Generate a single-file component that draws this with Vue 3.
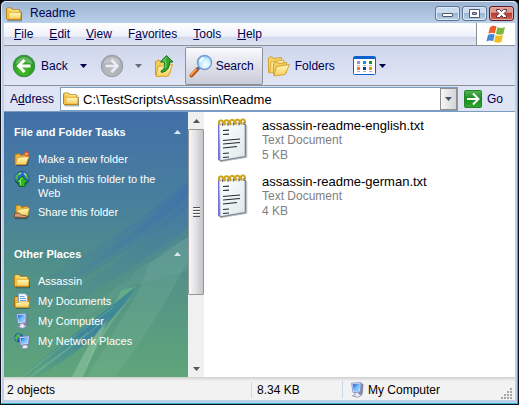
<script setup>
import { ref } from 'vue'

const menus = [
  { pre: '', key: 'F', post: 'ile' },
  { pre: '', key: 'E', post: 'dit' },
  { pre: '', key: 'V', post: 'iew' },
  { pre: 'F', key: 'a', post: 'vorites' },
  { pre: '', key: 'T', post: 'ools' },
  { pre: '', key: 'H', post: 'elp' },
]
const groups = [
  {
    title: 'File and Folder Tasks',
    items: [
      { icon: 'new-folder', label: 'Make a new folder' },
      { icon: 'publish', label: 'Publish this folder to the Web' },
      { icon: 'share', label: 'Share this folder' },
    ],
  },
  {
    title: 'Other Places',
    items: [
      { icon: 'folder', label: 'Assassin' },
      { icon: 'documents', label: 'My Documents' },
      { icon: 'computer', label: 'My Computer' },
      { icon: 'network', label: 'My Network Places' },
    ],
  },
]
const files = [
  { name: 'assassin-readme-english.txt', kind: 'Text Document', size: '5 KB' },
  { name: 'assassin-readme-german.txt', kind: 'Text Document', size: '4 KB' },
]
const address = ref('C:\\TestScripts\\Assassin\\Readme')
</script>

<template>
  <div class="window">
    <svg class="sprite" width="0" height="0" aria-hidden="true">
      <defs>
        <linearGradient id="g-folder" x1="0" y1="0" x2="0" y2="1">
          <stop offset="0" stop-color="#fff8bd" /><stop offset="1" stop-color="#f8cf5c" />
        </linearGradient>
        <linearGradient id="g-screen" x1="0" y1="0" x2="1" y2="1">
          <stop offset="0" stop-color="#1550c4" /><stop offset=".5" stop-color="#6fbaff" /><stop offset="1" stop-color="#a9dcff" />
        </linearGradient>
        <linearGradient id="g-go" x1="0" y1="0" x2="0" y2="1">
          <stop offset="0" stop-color="#56b356" /><stop offset=".5" stop-color="#178a1c" /><stop offset="1" stop-color="#34a82e" />
        </linearGradient>
        <radialGradient id="g-back" cx=".45" cy=".7" r=".8">
          <stop offset="0" stop-color="#4fc528" /><stop offset=".5" stop-color="#2da321" /><stop offset="1" stop-color="#2f8f3a" />
        </radialGradient>
        <radialGradient id="g-fwd" cx=".45" cy=".7" r=".8">
          <stop offset="0" stop-color="#bcbec4" /><stop offset="1" stop-color="#a2a4ac" />
        </radialGradient>
        <radialGradient id="g-lens" cx=".6" cy=".65" r=".7">
          <stop offset="0" stop-color="#ffffff" /><stop offset=".55" stop-color="#c0efff" /><stop offset="1" stop-color="#72bff0" />
        </radialGradient>
        <linearGradient id="g-page" x1="0" y1="0" x2="1" y2="1">
          <stop offset="0" stop-color="#ffffff" /><stop offset="1" stop-color="#dcebea" />
        </linearGradient>
      </defs>
      <symbol id="folder" viewBox="0 0 16 16">
        <path d="M1.500 14.800h14V6" fill="none" stroke="#2f3a3a" stroke-opacity=".55" />
        <path d="M.6 13V3.200Q.6 2 1.800 2h3.500l1.500 1.800h6Q14 3.800 14 5v1.500h1L14.500 13.500H1.200z" fill="#f7c94f" stroke="#b9790c" />
        <path d="M3 6.500h12L14.400 13H3z" fill="url(#g-folder)" stroke="#e0a526" stroke-width=".6" />
        <path d="M1.600 3h3.200l1.400 1.700H13" fill="none" stroke="#fff1a1" />
      </symbol>
      <symbol id="new-folder" viewBox="0 0 16 16">
        <path d="M2 14.600h11l2-6" fill="none" stroke="#2f3a3a" stroke-opacity=".6" />
        <path d="M1 13.500V3.400l4.200-.8 1.600 1.700 6-.9v8.300l-2 1.800z" fill="#eeb53c" stroke="#a96c0b" stroke-width=".8" />
        <path d="M3.600 6.600 15 5.300l-3 8.200H1.500z" fill="url(#g-folder)" stroke="#c98a1a" stroke-width=".6" />
        <path d="M12.500 0v6M9.500 3h6M10.400.9l4.200 4.200M14.600.9l-4.200 4.200" stroke="#f0502c" />
        <circle cx="12.500" cy="3" r="1.300" fill="#ffb04a" />
      </symbol>
      <symbol id="publish" viewBox="0 0 16 16">
        <circle cx="8" cy="7.500" r="7" fill="#2768c0" stroke="#123f7c" stroke-width=".7" />
        <path d="M1.500 5Q5 .6 7 1.400l-1 2.800-2 .6L3.200 9l-1.900-.8zM9 1.200l3.800 1.200 2 5.500-2.700-.5-1.400-3.800z" fill="#4fb84a" />
        <path d="M5 3.200 7.500 2M10 2l2 3" stroke="#d3eefa" stroke-width=".9" />
        <path d="M8 5 14 11.500h-3v4H5v-4H2z" fill="#2fb526" stroke="#0d6413" stroke-width=".9" />
        <path d="M8 6.700 5 10.300h1.500V14" fill="none" stroke="#98ed78" />
      </symbol>
      <symbol id="share" viewBox="0 0 16 16">
        <path d="M1 14.600h12l2-3" fill="none" stroke="#2f3a3a" stroke-opacity=".7" />
        <path d="M2 11V1.500h4.300l1.400 2L13.800 2v9z" fill="#f2bd42" stroke="#b0760f" stroke-width=".8" />
        <path d="M4 5.500 15.400 4l-2 8H2.800z" fill="url(#g-folder)" stroke="#cf9722" stroke-width=".6" />
        <path d="M.5 9.500 5 9l2.400 2 4.400.5 1.500 1.400-4.800.9L4 13 .5 13.400z" fill="#dba173" stroke="#6e3b20" stroke-width=".8" />
      </symbol>
      <symbol id="documents" viewBox="0 0 16 16">
        <path d="M1.500 15.300h14" stroke="#2f3a3a" stroke-opacity=".6" />
        <path d="M.6 14V4.500Q.6 3.500 2 3.500h12.500V14z" fill="#f2b83a" stroke="#a96c0b" />
        <path d="M4.400.6h6.700L13.600 3v8H4.400z" fill="#f4faff" stroke="#6494ca" stroke-width=".8" />
        <path d="M6 3.500h4.500M6 5.500h6M6 7.500h6" stroke="#63a5dd" />
        <path d="M1.500 9.500H5L6 8.800h9.300l-.6 5.400H1.500z" fill="url(#g-folder)" stroke="#d79d26" stroke-width=".7" />
      </symbol>
      <symbol id="computer" viewBox="0 0 16 16">
        <path d="m10.500 1 3.500 1.300-.8 9.200L10 14z" fill="#8a8cab" stroke="#5c6086" stroke-width=".6" />
        <path d="M2.600 1.200 12 .6l-.6 9.200-7.400.8z" fill="#d8e3fa" stroke="#6f83c0" stroke-width=".7" />
        <path d="m3.700 2.300 7.200-.5-.5 7-5.600.6z" fill="url(#g-screen)" />
        <path d="m5.800 10.800 3.800-.7.500 2 3 .8-4.600 2.500-5-1.600 2.500-1z" fill="#e8e9f2" stroke="#7c80a0" stroke-width=".7" />
      </symbol>
      <symbol id="network" viewBox="0 0 16 16">
        <circle cx="4.700" cy="4.800" r="4.500" fill="#1d57b4" />
        <path d="M.5 4.900 3.300.9l3 .2-.5 2.800-2.100 1L3 8.800z" fill="#4fb93f" />
        <path d="m13 11 1.800-7 .7.500-.6 6.600z" fill="#5c6086" />
        <path d="m5.200 3.700 10-.8-.6 8.300-8 1z" fill="#dce6fa" stroke="#6578b4" stroke-width=".7" />
        <path d="m6.300 4.900 7.800-.6-.5 6-6.100.7z" fill="url(#g-screen)" />
        <path d="m8.300 12.300 4.600-.5.500 1.700 1.800.7-4 1.500-5-.8 2.500-1z" fill="#eff0f6" stroke="#757a9c" stroke-width=".6" />
      </symbol>
      <symbol id="caret" viewBox="0 0 7 4"><path d="M0 0h7L3.500 4z" fill="currentColor" /></symbol>
      <symbol id="caret-up" viewBox="0 0 7 4"><path d="M0 4h7L3.500 0z" fill="currentColor" /></symbol>
    </svg>

    <header class="titlebar">
      <svg class="icon"><use href="#folder" /></svg>
      <h1>Readme</h1>
      <div class="controls">
        <button type="button" aria-label="Minimize">
          <svg width="13" height="11"><rect x="1.500" y="5.500" width="10" height="3" rx=".5" fill="#fff" stroke="#50586b" /></svg>
        </button>
        <button type="button" aria-label="Maximize">
          <svg width="13" height="11"><path d="M1.500 1.500h10v8h-10zM4.500 4.500v2h4v-2z" fill="#fff" fill-rule="evenodd" stroke="#50586b" /></svg>
        </button>
        <button type="button" class="close" aria-label="Close">
          <svg width="13" height="11"><path d="M1.500 1.500h3l2 2 2-2h3v1.500l-2.500 2.500 2.500 2.500v1.500h-3l-2-2-2 2h-3V8L4 5.500 1.500 3z" fill="#fff" stroke="#5f3440" /></svg>
        </button>
      </div>
    </header>

    <div class="menu-row">
      <nav class="menubar">
        <button v-for="m in menus" :key="m.key" type="button">{{ m.pre }}<u>{{ m.key }}</u>{{ m.post }}</button>
      </nav>
      <div class="brand">
        <svg width="22" height="20" viewBox="0 0 22 20">
          <path d="M5 3.300Q8.300.8 11.500 2.500L9.900 9.400Q6.700 8 3.300 9.800z" fill="#ed5c2b" />
          <path d="M12.500 3Q16 4.800 20 3l-1.700 7Q14.600 11.500 10.900 9.800z" fill="#7cb83b" />
          <path d="M3 10.900q3.300-1.800 6.700-.4l-1.600 6.700Q4.800 15.900 1.400 17.500z" fill="#4287d6" />
          <path d="M10.700 10.900q3.600 1.700 7.400.2l-1.700 6.900Q12.600 19.400 9 17.700z" fill="#f4bd20" />
        </svg>
      </div>
    </div>

    <div class="toolbar">
      <button type="button" class="tool back">
        <svg width="24" height="24" viewBox="0 0 24 24">
          <circle cx="12" cy="12" r="10.800" fill="url(#g-back)" stroke="#3c8c50" />
          <path d="M3.500 10Q5 3 12 3t8.500 7Q12 6.500 3.500 10z" fill="#fff" opacity=".28" />
          <path d="M12.500 6 6.500 12l6 6M7 12H18.500" fill="none" stroke="#fff" stroke-width="3" />
        </svg>
        <span>Back</span>
        <svg class="caret"><use href="#caret" /></svg>
      </button>
      <button type="button" class="tool forward" aria-label="Forward">
        <svg width="24" height="24" viewBox="0 0 24 24">
          <circle cx="12" cy="12" r="10.800" fill="url(#g-fwd)" stroke="#999ba4" />
          <path d="M3.500 10Q5 3 12 3t8.500 7Q12 6.500 3.500 10z" fill="#fff" opacity=".28" />
          <path d="M11.500 6 17.500 12l-6 6M17 12H5.500" fill="none" stroke="#eceef5" stroke-width="2.600" />
        </svg>
        <svg class="caret"><use href="#caret" /></svg>
      </button>
      <button type="button" class="tool up" aria-label="Up">
        <svg width="20" height="24" viewBox="0 0 20 24">
          <path d="M1.500 21V7.500L4.500 6l2.500 1.500 9-1.500v13l-3 3z" fill="#f5cb58" stroke="#cf9a2c" />
          <path d="m4 12.500 14.500-2-4 11.500L2 22.500z" fill="url(#g-folder)" stroke="#d7a233" />
          <path d="M7 17q4.500-1.500 3.500-9H6.500L12.500 1.500 19 8h-3.500q.5 9-8 10.500z" fill="#2fa62c" stroke="#16751d" />
          <path d="M12.500 3.300 9.500 6.900h2.200q.8 4-.8 7" fill="none" stroke="#93dc7b" />
        </svg>
      </button>
      <button type="button" class="tool search" aria-pressed="true">
        <svg width="24" height="24" viewBox="0 0 24 24">
          <path d="M2.500 21.500 8.500 15" stroke="#b5541c" stroke-width="4" stroke-linecap="round" />
          <path d="m2 20.800 5.500-6" stroke="#ff9a45" stroke-width="1.800" stroke-linecap="round" />
          <path d="m8 15.500 2-2" stroke="#536b91" stroke-width="3" />
          <circle cx="15.500" cy="8.500" r="7" fill="url(#g-lens)" stroke="#7d98d4" stroke-width="1.500" />
          <path d="M11 8q.5-3.500 4-4" fill="none" stroke="#fff" stroke-width="2" />
        </svg>
        <span>Search</span>
      </button>
      <button type="button" class="tool folders">
        <svg width="23" height="22" viewBox="0 0 23 22">
          <path d="M1.500 17.500V3L4 1.500l3 2L14.500 2.500v11z" fill="#f8d263" stroke="#d3a33a" />
          <path d="m4 7 13-2-3 11-11.500 2z" fill="url(#g-folder)" stroke="#dcac42" />
          <path d="M6.500 20V8.500L9.500 7l2.500 1.500 7.500-1v10z" fill="#f8d05a" stroke="#d0a03a" />
          <path d="m9.500 11.500 13-2-4.500 10-11 1.500z" fill="url(#g-folder)" stroke="#d5a238" />
        </svg>
        <span>Folders</span>
      </button>
      <button type="button" class="tool views" aria-label="Views">
        <svg width="23" height="19" viewBox="0 0 23 19">
          <rect x=".5" y=".5" width="22" height="18" rx="1" fill="#fff" stroke="#0b62cc" />
          <path d="M1 1h21v2H1z" fill="#0b62cc" />
          <path d="M4 5h3v3H4z" fill="#9a8fc8" /><path d="M10 5h3v3h-3z" fill="#1590ea" /><path d="M16 5h3v3h-3z" fill="#0b9c20" />
          <path d="M4 11h3v3H4z" fill="#ff6b45" /><path d="M10 11h3v3h-3z" fill="#0b3a9b" /><path d="M16 11h3v3h-3z" fill="#d2990d" />
          <path d="M4 9.500h3m3 0h3m3 0h3M4 15.500h3m3 0h3m3 0h3" stroke="#b4b4c0" />
        </svg>
        <svg class="caret"><use href="#caret" /></svg>
      </button>
    </div>

    <form class="addressbar" @submit.prevent>
      <label for="address">A<u>d</u>dress</label>
      <div class="field">
        <svg class="icon"><use href="#folder" /></svg>
        <input id="address" v-model="address" type="text" spellcheck="false" />
        <button type="button" class="drop" aria-label="Show addresses"><svg class="caret"><use href="#caret" /></svg></button>
      </div>
      <button type="submit" class="go">
        <svg width="18" height="18" viewBox="0 0 18 18">
          <rect x=".5" y=".5" width="17" height="17" rx="1" fill="url(#g-go)" stroke="#25832c" />
          <path d="M9 3.500 14.500 9 9 14.500M14 9H3" fill="none" stroke="#fff" stroke-width="2" />
        </svg>
        <span>Go</span>
      </button>
    </form>

    <main class="content">
      <aside class="sidebar">
        <svg class="aurora" viewBox="0 0 184 267" preserveAspectRatio="none" aria-hidden="true">
          <defs>
            <linearGradient id="g-beam" x1="1" y1="0" x2="0" y2="1">
              <stop offset="0" stop-color="#3f6fae" stop-opacity=".5" /><stop offset="1" stop-color="#3f7fa0" stop-opacity="0" />
            </linearGradient>
            <linearGradient id="g-streak" x1="1" y1="0" x2="0" y2="1">
              <stop offset="0" stop-color="#3f8a97" /><stop offset=".5" stop-color="#3a829c" stop-opacity=".85" /><stop offset="1" stop-color="#4d9a8c" stop-opacity=".1" />
            </linearGradient>
          </defs>
          <path d="M184 68Q130 120 0 190V216Q130 140 184 96z" fill="url(#g-beam)" />
          <path d="M184 74Q120 136 0 206V210Q130 136 184 84z" fill="url(#g-beam)" />
          <path d="M184 92Q120 150 20 212l-20 24Q130 160 184 116z" fill="url(#g-beam)" opacity=".7" />
          <path d="M184 126Q168 134 145 152 132 156 128 166L40 228Q90 205 128 175L184 160z" fill="#8fc5b0" opacity=".1" />
          <path d="M184 126 145 153l-12 30-50 84h28Q150 215 184 150z" fill="#9ad0b4" opacity=".14" />
          <path d="M117 180 133 175Q126 190 112 200L98 207Q112 192 117 180z" fill="#69b088" opacity=".8" />
          <path d="M133 175Q98 203 60 232 36 250 14 267H34Q78 240 98 218 122 194 133 175z" fill="url(#g-streak)" />
          <path d="M110 196Q70 226 18 267M100 210Q70 236 26 267M84 222Q62 240 32 262" fill="none" stroke="#9ccdb4" stroke-width=".8" opacity=".45" />
          <path d="M104 208Q84 232 68 267H79Q92 236 104 208z" fill="#a4d3ae" opacity=".4" />
          <path d="M130 184Q100 214 88 240L79 267Q98 220 130 184z" fill="#8ec8a2" opacity=".35" />
        </svg>
        <section v-for="g in groups" :key="g.title" class="group">
          <h2>
            <button type="button">
              <span>{{ g.title }}</span>
              <svg class="caret"><use href="#caret-up" /></svg>
            </button>
          </h2>
          <ul>
            <li v-for="i in g.items" :key="i.label">
              <a href="#">
                <svg class="icon"><use :href="'#' + i.icon" /></svg>
                <span>{{ i.label }}</span>
              </a>
            </li>
          </ul>
        </section>
      </aside>

      <div class="scrollbar">
        <button type="button" aria-label="Scroll up"><svg class="caret"><use href="#caret-up" /></svg></button>
        <div class="track"><div class="thumb"><i></i></div></div>
        <button type="button" aria-label="Scroll down"><svg class="caret"><use href="#caret" /></svg></button>
      </div>

      <ul class="files">
        <li v-for="f in files" :key="f.name">
          <svg width="32" height="46" viewBox="0 0 32 46">
            <path d="M4 44.500 30.500 40V8" fill="none" stroke="#8f939c" stroke-width="1.500" opacity=".6" />
            <path d="M2 6.500 4 5v39l-2-1z" fill="#7670d8" />
            <path d="m3.500 6.500 25-1V39L4.500 43.500z" fill="url(#g-page)" stroke="#c3c8d0" />
            <path d="M29.500 7v32.500L4 44" fill="none" stroke="#7e828c" />
            <path d="m7 13.500 6-.3M7 17.500l6-.3M7 23.500l17-1.500M7 27l17-1.500M7 31l14-1.500M7 36.500l6-.5M7 40.500l6-.5" stroke="#252a2d" stroke-width="1.200" />
            <path d="M4 8.500Q1.500 4 4.500 3.500T7.500 8M9.500 8.200Q7 3.700 10 3.200t3 4.500M15 7.900q-2.500-4.500.5-5t3 4.500M20.500 7.700q-2.500-4.500.5-5t3 4.500M26 7.500q-2.500-4.500.5-5t2.500 4" fill="none" stroke="#cda51c" stroke-width="2" />
            <path d="M6.500 6.500v2.500m5.500-2.700v2.500m5.500-2.800v2.500m5.500-2.700v2.500m5-2.700v2.500" stroke="#5f5378" stroke-width="1.200" />
          </svg>
          <div class="meta">
            <span class="name">{{ f.name }}</span>
            <span>{{ f.kind }}</span>
            <span>{{ f.size }}</span>
          </div>
        </li>
      </ul>
    </main>

    <footer class="status">
      <span class="count">2 objects</span>
      <span class="size">8.34 KB</span>
      <span class="place"><svg class="icon"><use href="#computer" /></svg>My Computer</span>
      <svg class="grip" width="12" height="12" viewBox="0 0 12 12">
        <path d="M9 0h2v2H9zM6 3h2v2H6zM9 3h2v2H9zM3 6h2v2H3zM6 6h2v2H6zM9 6h2v2H9zM0 9h2v2H0zM3 9h2v2H3zM6 9h2v2H6zM9 9h2v2H9z" fill="#a6a6a6" />
      </svg>
    </footer>
  </div>
</template>

<style>
body { margin: 0; background: #000; }
</style>

<style scoped>
* { box-sizing: border-box; }
.window {
  display: flex;
  flex-direction: column;
  min-height: 100vh;
  border: 1px solid #101018;
  border-radius: 6px 6px 0 0;
  background: #bcd0ea;
  box-shadow: inset -1px -1px #2fb4c8, inset 1px 0 #d8e8fa;
  padding: 0 3px 4px;
  font: 12px/15px "Liberation Sans", Arial, sans-serif;
  color: #000;
}
.sprite { position: absolute; }
button {
  margin: 0;
  padding: 0;
  border: 0;
  background: none;
  font: inherit;
  color: inherit;
}
h1, h2, ul { margin: 0; padding: 0; font: inherit; list-style: none; }
svg { flex: none; display: block; }
.icon { width: 16px; height: 16px; }
.caret { width: 7px; height: 4px; }

.titlebar {
  display: flex;
  align-items: center;
  gap: 8px;
  height: 22px;
  margin: 0 -2px;
  padding: 2px 3px 0 4px;
  border-top: 1px solid #e6f0fa;
  border-radius: 5px 5px 0 0;
  background: linear-gradient(#9cb4d2, #b9d0e9);
  color: #000050;
}
h1 { flex: 1; }
.controls { display: flex; gap: 2px; }
.controls button {
  display: grid;
  place-items: center;
  width: 25px;
  height: 15px;
  border: 1px solid #5e7492;
  border-radius: 3px;
  background: linear-gradient(#cbdcee 45%, #9db7d3 50%, #b8cfe6);
  box-shadow: inset 0 0 0 1px #dce9f6;
}
.controls .close {
  border-color: #5c1a24;
  background: linear-gradient(#dd9a90 40%, #b8382d 50%, #cf6a56);
  box-shadow: inset 0 0 0 1px #e7aaa0;
}

.menu-row { display: flex; height: 23px; border-bottom: 1px solid #8b8f96; color: #000050; }
.menubar {
  flex: 1;
  display: flex;
  align-items: center;
  gap: 16px;
  padding-left: 10px;
  background: linear-gradient(#fff, #eef1fa 60%, #d3d9ec 65%, #dfe4f3);
}
.brand {
  display: grid;
  place-items: center;
  width: 39px;
  border-left: 1px solid #8b8f96;
  background: #fff;
}

.toolbar {
  display: flex;
  align-items: center;
  height: 40px;
  padding-left: 8px;
  border-bottom: 1px solid #8b8f96;
  background: linear-gradient(#cfd7ec, #e1e6f6);
  color: #000050;
}
.tool { display: flex; align-items: center; gap: 5px; height: 38px; }
.tool span { padding-top: 2px; }
.back .caret { margin-left: 7px; }
.forward { margin-left: 13px; gap: 11px; color: #6b6b78; }
.up { margin-left: 12px; }
.search {
  margin-left: 11px;
  padding: 0 8px 0 3px;
  gap: 3px;
  border: 1px solid #8e919a;
  border-radius: 2px;
  background: linear-gradient(#fafbfe, #dfe1ea 50%, #c9ccd9);
}
.folders { margin-left: 4px; }
.views { margin-left: 18px; gap: 3px; }

.addressbar {
  display: flex;
  align-items: center;
  height: 25px;
  padding: 1px 0 0 6px;
  background: #dfe4f5;
  color: #000050;
}
.field {
  flex: 1;
  display: flex;
  align-items: center;
  align-self: stretch;
  min-width: 0;
  margin-left: 6px;
  padding-left: 2px;
  border: 1px solid #7a9cc0;
  background: #fff;
}
input {
  flex: 1;
  min-width: 0;
  margin: 0;
  padding: 2px 0 0 4px;
  border: 0;
  outline: 0;
  background: none;
  font: 13px/16px "Liberation Sans", Arial, sans-serif;
  color: #000;
}
.drop {
  display: grid;
  place-items: center;
  align-self: stretch;
  width: 17px;
  border: 1px solid #8f8f8f;
  background: linear-gradient(90deg, #f6f6f6, #d5d5d8);
  color: #44546f;
}
.go { display: flex; align-items: center; gap: 5px; padding: 0 12px 0 6px; }

.content { flex: 1; display: flex; border-top: 1px solid #7a9cc0; background: #fff; }
.sidebar {
  position: relative;
  display: flex;
  flex-direction: column;
  gap: 27px;
  width: 184px;
  padding: 13px 7px 24px 10px;
  background: linear-gradient(#426fa8, #48809c 35%, #519088 60%, #5fa57a);
  font-size: 11px;
  line-height: 14px;
  color: #fff;
}
.aurora { position: absolute; inset: 0; width: 100%; height: 100%; }
.group { position: relative; }
h2 button {
  display: flex;
  align-items: center;
  justify-content: space-between;
  width: 100%;
  font-weight: bold;
  text-align: left;
}
h2 .caret { color: #dce8f0; }
.group ul { display: grid; gap: 4px; margin-top: 12px; }
.group a {
  display: flex;
  align-items: flex-start;
  gap: 8px;
  min-height: 16px;
  padding-right: 20px;
  color: #fff;
  text-decoration: none;
}
.group a span { padding-top: 1px; }

.scrollbar {
  display: flex;
  flex-direction: column;
  width: 16px;
  background: #f0f0f0;
}
.scrollbar button { display: grid; place-items: center; height: 17px; color: #555; }
.track { flex: 1; }
.thumb {
  display: grid;
  place-items: center;
  height: 72%;
  border: 1px solid #969696;
  border-radius: 1px;
  background: linear-gradient(90deg, #f7f7f7, #e4e4e6 45%, #c4c4c8);
}
.thumb i {
  width: 7px;
  height: 10px;
  background: repeating-linear-gradient(#555 0 1px, #fafafa 1px 2px, transparent 2px 3px);
}

.files { flex: 1; padding: 5px 12px; display: grid; gap: 10px; align-content: start; }
.files li { display: flex; gap: 14px; color: #808080; }
.meta { display: grid; grid-template-rows: repeat(3, 15px); padding-top: 1px; }
.name { font-size: 13px; color: #000; }

.status {
  display: flex;
  align-items: center;
  height: 23px;
  padding: 2px 2px 0 3px;
  background: linear-gradient(#cfcfcf, #f2f2f2 4px);
}
.count { flex: 1; }
.size { width: 91px; padding-left: 5px; border-left: 1px solid #c4d8f2; }
.place { display: flex; align-items: center; gap: 3px; width: 159px; padding-left: 6px; border-left: 1px solid #c4d8f2; }
.status span { padding-top: 1px; }
.grip { align-self: flex-end; }
</style>
